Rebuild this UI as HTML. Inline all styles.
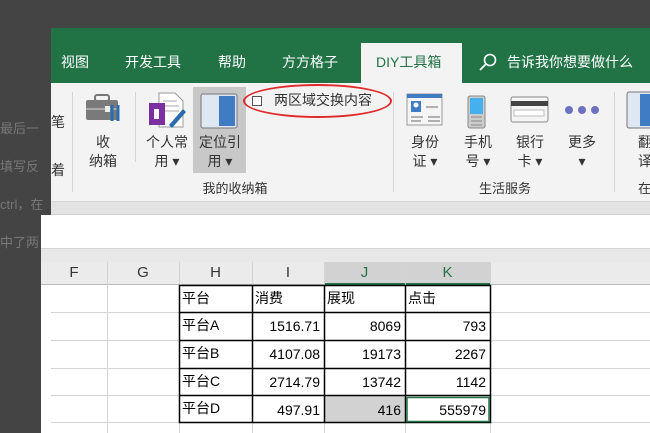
<!DOCTYPE html>
<html><head><meta charset="utf-8"><style>
*{margin:0;padding:0;box-sizing:border-box}
body{width:650px;height:433px;overflow:hidden;background:#444;position:relative;font-family:"Liberation Sans","Noto Sans CJK SC",sans-serif}
.a{position:absolute}
.t{position:absolute;font-size:14px;color:#fff;top:52px}
.r{position:absolute;font-size:14px;color:#333;text-align:center;line-height:19px}
.sep{position:absolute;width:1px;background:#d5d5d5;top:92px;height:100px}
.g{font-size:13px}
.cell{position:absolute;font-size:14px;color:#000;height:27px;line-height:27px}
</style></head><body>
<div class="a" style="left:0;top:110px;color:#777;font-size:13px;line-height:38px">最后一<br>填写反<br>ctrl，在<br>中了两</div>
<div class="a" style="left:51px;top:28px;width:599px;height:55px;background:#217346"></div>
<div class="t" style="left:61px">视图</div>
<div class="t" style="left:125px">开发工具</div>
<div class="t" style="left:218px">帮助</div>
<div class="t" style="left:282px">方方格子</div>
<div class="a" style="left:361px;top:43px;width:101px;height:41px;background:#f3f3f3"></div>
<div class="t" style="left:376px;color:#217346">DIY工具箱</div>
<svg class="a" style="left:478px;top:52px" width="20" height="20"><circle cx="12" cy="8" r="5.5" fill="none" stroke="#fff" stroke-width="1.6"/><line x1="8" y1="12" x2="2" y2="18" stroke="#fff" stroke-width="1.8"/></svg>
<div class="t" style="left:507px">告诉我你想要做什么</div>
<div class="a" style="left:51px;top:83px;width:599px;height:118px;background:#f3f3f3"></div>
<div class="a" style="left:51px;top:110px;color:#333;font-size:14px;line-height:24px">笔<br><br>着</div>
<div class="sep" style="left:72px"></div>
<div class="sep" style="left:135px;height:70px"></div>
<div class="sep" style="left:393px"></div>
<div class="sep" style="left:614px"></div>
<svg class="a" style="left:85px;top:93px" width="38" height="30"><rect x="10" y="2" width="14" height="6" rx="2" fill="none" stroke="#777" stroke-width="2"/><rect x="1" y="7" width="32" height="20" rx="2" fill="#7a7a7a"/><rect x="1" y="15" width="32" height="2" fill="#aaa"/><rect x="20" y="13" width="5" height="6" fill="#eee"/><path d="M27 12v16M33 12v16" stroke="#2b6cb0" stroke-width="3"/></svg>
<div class="r" style="left:88px;top:133px;width:30px">收<br>纳箱</div>
<svg class="a" style="left:147px;top:91px" width="40" height="40"><path d="M12 2h16l8 8v26H12z" fill="#fff" stroke="#999"/><path d="M16 10h14M16 15h16M16 20h16" stroke="#aaa"/><rect x="2" y="12" width="16" height="22" fill="#7b2fa0"/><rect x="7" y="18" width="5" height="10" fill="#fff"/><path d="M22 34l14-16 3 3-14 16z" fill="#2b6cb0"/></svg>
<div class="r" style="left:143px;top:133px;width:48px">个人常<br>用 ▾</div>
<div class="a" style="left:193px;top:87px;width:53px;height:86px;background:#c8c8c8"></div>
<svg class="a" style="left:200px;top:93px" width="38" height="36"><rect x="1" y="1" width="36" height="34" rx="2" fill="#dfe7f3" stroke="#777"/><rect x="19" y="3" width="16" height="30" fill="#3f7cc4"/></svg>
<div class="r" style="left:194px;top:133px;width:52px">定位引<br>用 ▾</div>
<div class="a" style="left:252px;top:96px;width:10px;height:10px;border:1px solid #555;background:#fff"></div>
<div class="r" style="left:274px;top:91px">两区域交换内容</div>
<div class="a" style="left:243px;top:84px;width:149px;height:34px;border:2px solid #e02a2a;border-radius:50%"></div>
<div class="r g" style="left:190px;top:179px;width:90px">我的收纳箱</div>
<svg class="a" style="left:406px;top:93px" width="38" height="34"><rect x="1" y="1" width="35" height="31" fill="#f5f5f5" stroke="#999"/><rect x="1" y="1" width="35" height="4" fill="#3f7cc4"/><rect x="5" y="8" width="10" height="11" fill="#3f7cc4"/><circle cx="10" cy="12" r="2.5" fill="#fff"/><path d="M5 24h12M5 28h10M20 14h12M22 24h12M22 28h12" stroke="#999" stroke-width="1.5"/></svg>
<div class="r" style="left:409px;top:133px;width:32px">身份<br>证 ▾</div>
<svg class="a" style="left:466px;top:93px" width="22" height="36"><rect x="2" y="3" width="17" height="32" rx="2" fill="#ccc" stroke="#888"/><rect x="4" y="5" width="13" height="16" fill="#45b0ee"/><path d="M5 24h11M5 28h11M5 32h11" stroke="#888"/></svg>
<div class="r" style="left:462px;top:133px;width:32px">手机<br>号 ▾</div>
<svg class="a" style="left:510px;top:96px" width="40" height="28"><rect x="1" y="1" width="37" height="25" rx="2" fill="#f5f5f5" stroke="#888"/><rect x="1" y="5" width="37" height="5" fill="#444"/><rect x="4" y="14" width="30" height="6" fill="#fff" stroke="#bbb"/></svg>
<div class="r" style="left:514px;top:133px;width:32px">银行<br>卡 ▾</div>
<svg class="a" style="left:564px;top:104px" width="36" height="12"><circle cx="5" cy="6" r="4" fill="#6d72c3"/><circle cx="18" cy="6" r="4" fill="#6d72c3"/><circle cx="31" cy="6" r="4" fill="#6d72c3"/></svg>
<div class="r" style="left:566px;top:133px;width:32px">更多<br>▾</div>
<svg class="a" style="left:626px;top:91px" width="24" height="38"><rect x="1" y="1" width="30" height="36" rx="2" fill="#dfe7f3" stroke="#777"/><rect x="14" y="3" width="12" height="32" fill="#3f7cc4"/></svg>
<div class="r" style="left:638px;top:133px">翻<br>译</div>
<div class="r g" style="left:470px;top:179px;width:70px">生活服务</div>
<div class="r g" style="left:638px;top:179px">在</div>
<div class="a" style="left:51px;top:201px;width:599px;height:14px;background:#e3e3e3;border-top:1px solid #d6d6d6;border-bottom:1px solid #d0d0d0"></div>
<div class="a" style="left:41px;top:215px;width:609px;height:218px;background:#fff"></div>
<div class="a" style="left:41px;top:248px;width:609px;height:14px;background:#e8e8e8;border-top:1px solid #d4d4d4"></div>
<div class="a" style="left:41px;top:262px;width:609px;height:23px;background:#ebebeb;border-bottom:1px solid #bbb"></div>
<div class="a" style="left:324px;top:262px;width:166px;height:23px;background:#d2d2d2;border-bottom:2px solid #217346"></div>
<div class="a" style="font-size:15px;color:#333;top:264px;left:41px;width:66px;text-align:center">F</div>
<div class="a" style="font-size:15px;color:#333;top:264px;left:107px;width:72px;text-align:center">G</div>
<div class="a" style="font-size:15px;color:#333;top:264px;left:179px;width:73px;text-align:center">H</div>
<div class="a" style="font-size:15px;color:#333;top:264px;left:252px;width:72px;text-align:center">I</div>
<div class="a" style="font-size:15px;color:#217346;top:264px;left:324px;width:81px;text-align:center">J</div>
<div class="a" style="font-size:15px;color:#217346;top:264px;left:405px;width:85px;text-align:center">K</div>
<svg class="a" style="left:51px;top:262px" width="599" height="171">
<g stroke="#d4d4d4"><path d="M56.5 0v171M128.5 0v171M201.5 0v171M273.5 0v171M354.5 0v171M439.5 0v171M-10 50.5h609M-10 78.5h609M-10 106.5h609M-10 133.5h609M-10 160.5h609"/></g>
<rect x="274" y="134" width="80" height="26" fill="#d2d2d2"/>
<g stroke="#000" stroke-width="1.5" fill="none"><rect x="128.5" y="23.5" width="311" height="137"/><path d="M201.5 23v138M273.5 23v138M354.5 23v138M128 50.5h312M128 78.5h312M128 106.5h312M128 133.5h312"/></g>
<rect x="356" y="135.5" width="82" height="24" fill="none" stroke="#217346" stroke-width="1.5"/>
</svg>
<div class="cell" style="left:182px;top:285px">平台</div>
<div class="cell" style="left:255px;top:285px">消费</div>
<div class="cell" style="left:327px;top:285px">展现</div>
<div class="cell" style="left:408px;top:285px">点击</div>
<div class="cell" style="left:182px;top:312px">平台A</div>
<div class="cell" style="left:182px;top:340px">平台B</div>
<div class="cell" style="left:182px;top:368px">平台C</div>
<div class="cell" style="left:182px;top:395px">平台D</div>
<div class="cell" style="left:252px;top:312px;width:68px;text-align:right;line-height:28px;height:auto">1516.71<br>4107.08<br>2714.79<br>497.91</div>
<div class="cell" style="left:324px;top:312px;width:77px;text-align:right;line-height:28px;height:auto">8069<br>19173<br>13742<br>416</div>
<div class="cell" style="left:405px;top:312px;width:81px;text-align:right;line-height:28px;height:auto">793<br>2267<br>1142<br>555979</div>
</body></html>
